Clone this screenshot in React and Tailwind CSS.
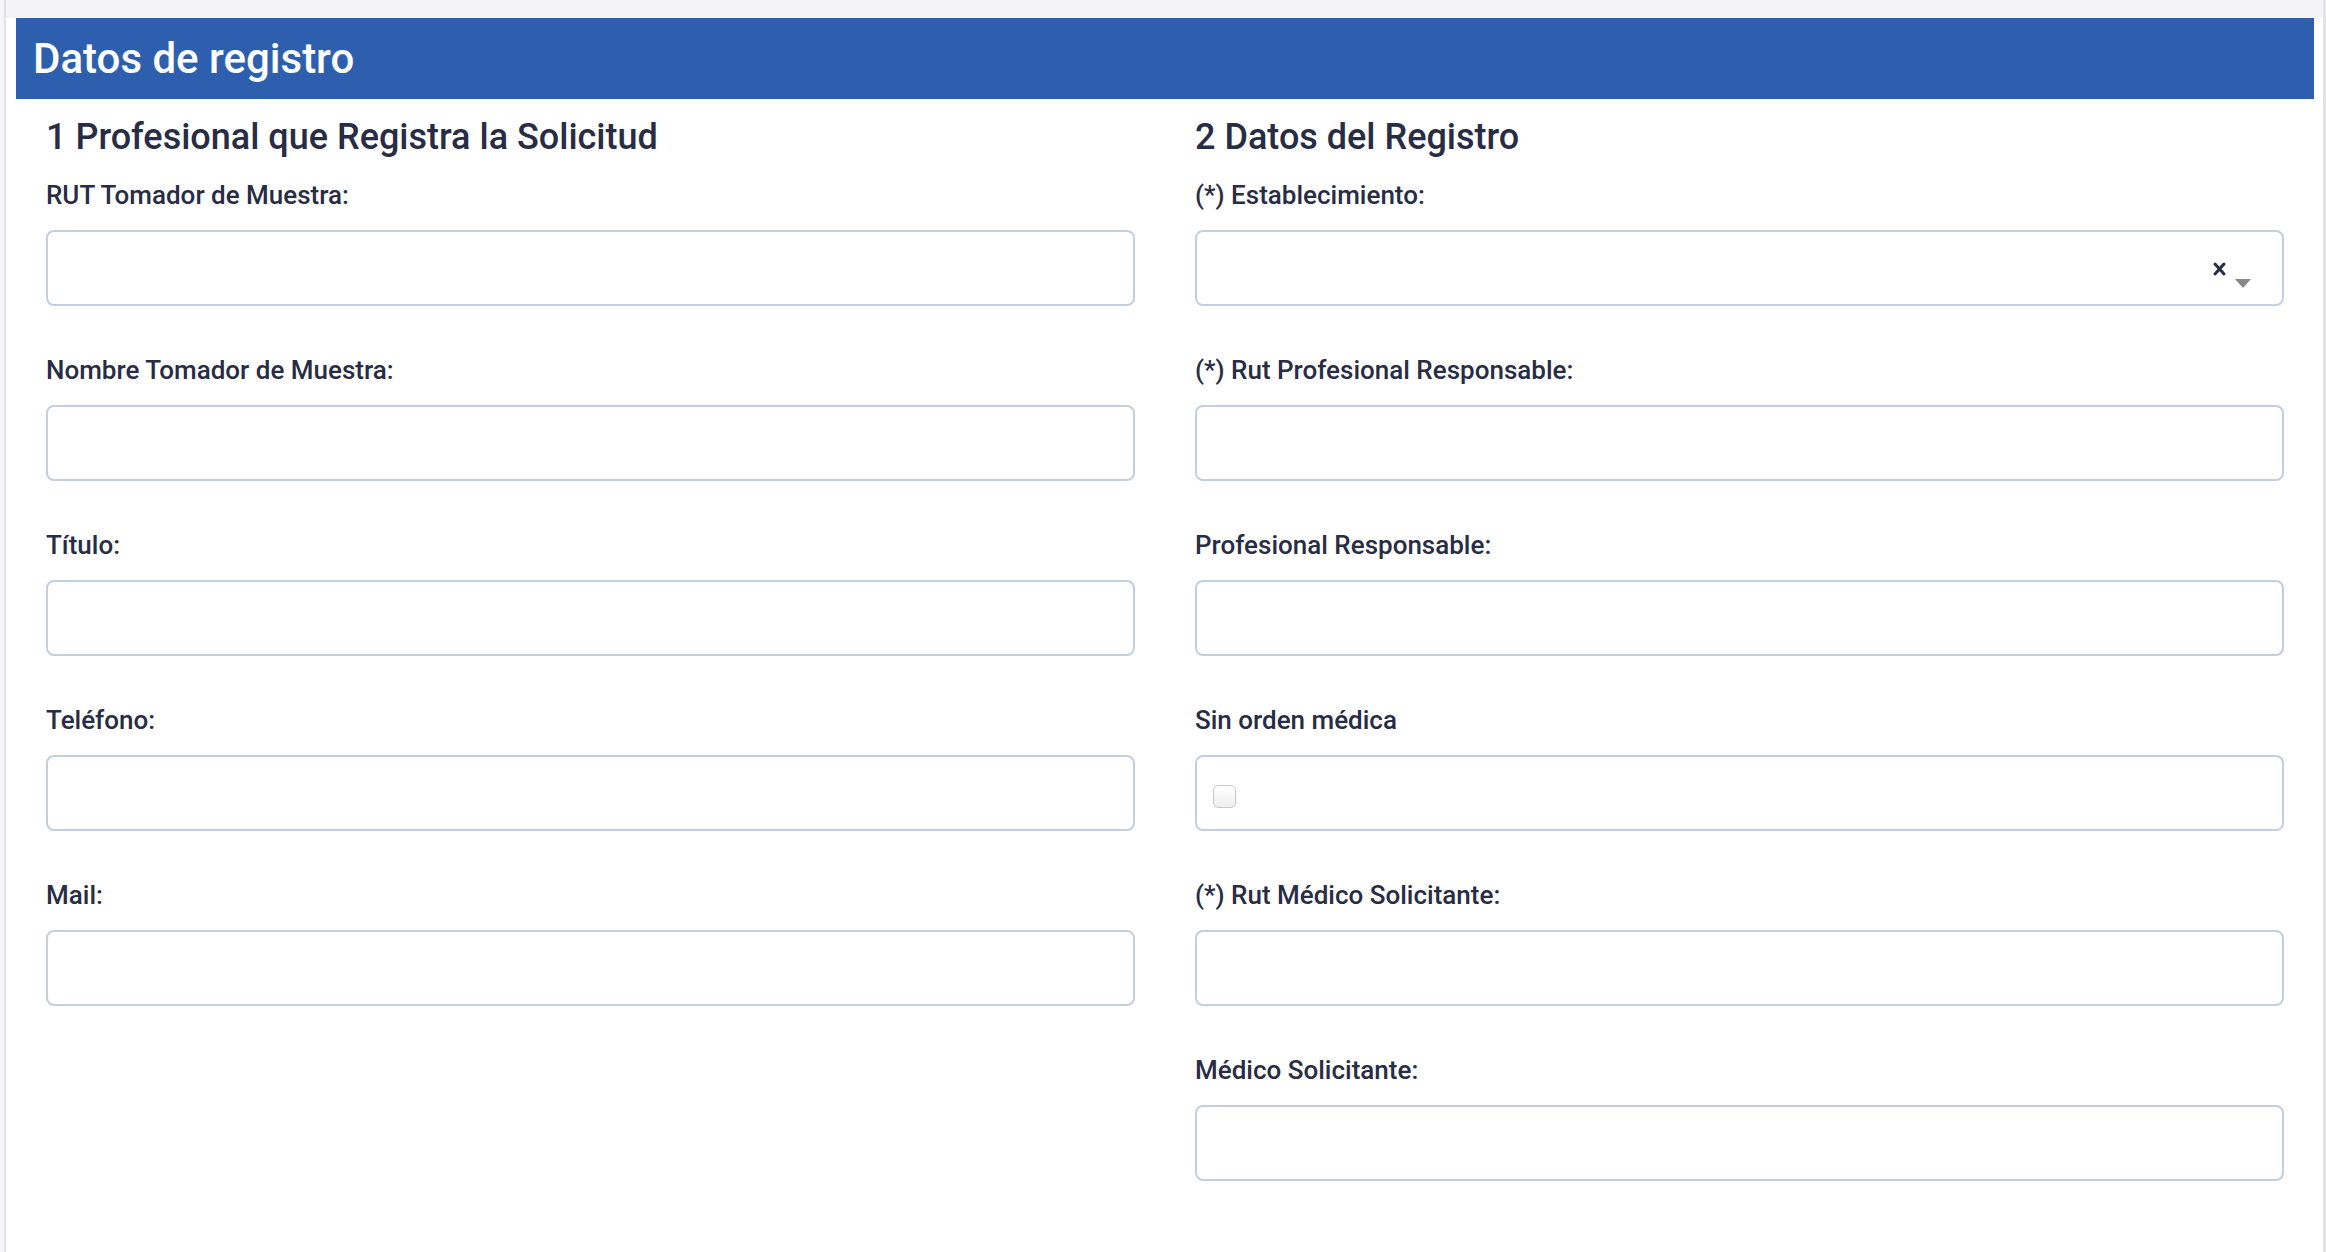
import React from 'react';

const leftFields = [
  { label: 'RUT Tomador de Muestra:' },
  { label: 'Nombre Tomador de Muestra:' },
  { label: 'Título:' },
  { label: 'Teléfono:' },
  { label: 'Mail:' },
];

const rightFields = [
  { label: '(*) Establecimiento:', type: 'select' },
  { label: '(*) Rut Profesional Responsable:' },
  { label: 'Profesional Responsable:' },
  { label: 'Sin orden médica', type: 'checkbox' },
  { label: '(*) Rut Médico Solicitante:' },
  { label: 'Médico Solicitante:' },
];

const Field = ({ label, type }) => {
  return (
    <div className="mb-[49px]">
      <label className="block text-[26px] leading-[30px] font-medium text-[#282c44] mb-[20px]">
        {label}
      </label>
      {type === 'select' ? (
        <div className="relative h-[76px] w-full rounded-[8px] border-2 border-[#c3cfdd] bg-white">
          <span className="absolute right-[56px] top-[30px] text-[#282c44]">
            <svg width="13" height="14" viewBox="0 0 13 14">
              <path d="M2 2 L11 12 M11 2 L2 12" stroke="currentColor" strokeWidth="3" strokeLinecap="round" />
            </svg>
          </span>
          <span className="absolute right-[31px] top-[47px] h-0 w-0 border-l-[8px] border-r-[8px] border-t-[9px] border-l-transparent border-r-transparent border-t-[#888888]" />
        </div>
      ) : type === 'checkbox' ? (
        <div className="h-[76px] w-full rounded-[8px] border-2 border-[#c3cfdd] bg-white pl-[16px] pt-[28px]">
          <span className="block h-[23px] w-[23px] rounded-[5px] border border-[#c9c9cd] bg-gradient-to-b from-white to-[#eeeeee]" />
        </div>
      ) : (
        <input
          type="text"
          className="block h-[76px] w-full rounded-[8px] border-2 border-[#c3cfdd] bg-white px-4 outline-none"
        />
      )}
    </div>
  );
};

const App = () => {
  return (
    <div className="min-h-screen bg-[#f6f6f8] pl-[4px]" style={{ fontFamily: 'Roboto, "Noto Sans", sans-serif' }}>
      <div className="min-h-screen border-l-2 border-r-[3px] border-[#e3e3e7] bg-[#f4f4f6] pt-[18px]">
        <div className="min-h-[1234px] bg-white pl-[10px] pr-[9px]">
          {/* Encabezado */}
          <div className="h-[81px] bg-[#2e5fae] pl-[17px] flex items-center">
            <h1 className="text-[42px] leading-[81px] font-medium text-white">Datos de registro</h1>
          </div>

          <div className="grid grid-cols-2">
            <div className="px-[30px]">
              <h2 className="mt-[17px] mb-[21px] text-[36px] leading-[43px] font-medium text-[#282c44]">
                1 Profesional que Registra la Solicitud
              </h2>
              {leftFields.map((f) => (
                <Field key={f.label} {...f} />
              ))}
            </div>
            <div className="px-[30px]">
              <h2 className="mt-[17px] mb-[21px] text-[36px] leading-[43px] font-medium text-[#282c44]">
                2 Datos del Registro
              </h2>
              {rightFields.map((f) => (
                <Field key={f.label} {...f} />
              ))}
            </div>
          </div>
        </div>
      </div>
    </div>
  );
};

export default App;
